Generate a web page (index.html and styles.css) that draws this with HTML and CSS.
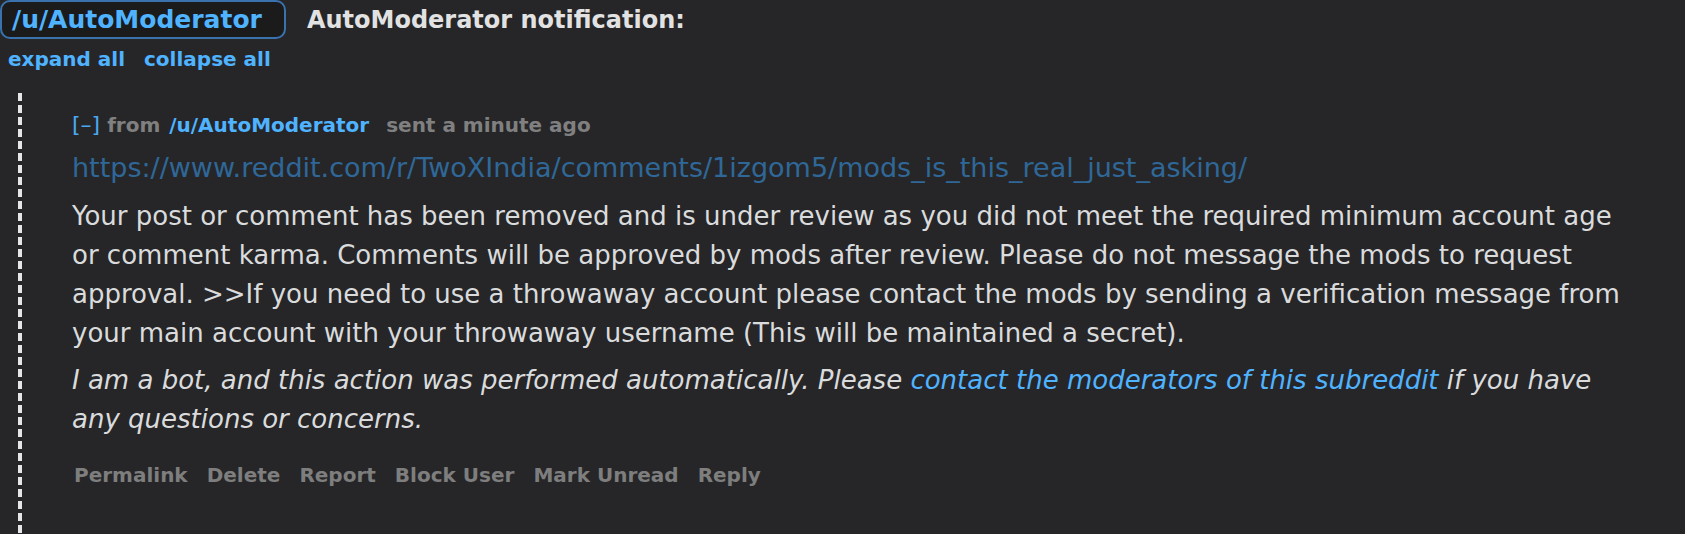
FILE: index.html
```html
<!DOCTYPE html>
<html lang="en">
<head>
    <meta charset="UTF-8">
    <title>AutoModerator notification</title>
    <link rel="stylesheet" href="styles.css">
</head>
<body>
    <div class="page">
        <div class="notice-head">
            <a class="user-pill" href="#">/u/AutoModerator</a>
            <span class="notice-title">AutoModerator notification:</span>
        </div>

        <div class="tree-tools">
            <a href="#">expand all</a>
            <a href="#">collapse all</a>
        </div>

        <div class="thread">
            <div class="message">
                <div class="tagline">
                    <a class="toggle" href="#">[–]</a>
                    <span>from</span>
                    <a class="author" href="#">/u/AutoModerator</a>
                    <span class="age">sent a minute ago</span>
                </div>

                <a class="subject-link" href="#">https://www.reddit.com/r/TwoXIndia/comments/1izgom5/mods_is_this_real_just_asking/</a>

                <div class="md">
                    <p>Your post or comment has been removed and is under review as you did not meet the required minimum account age or comment karma. Comments will be approved by mods after review. Please do not message the mods to request approval. &gt;&gt;If you need to use a throwaway account please contact the mods by sending a verification message from your main account with your throwaway username (This will be maintained a secret).</p>
                    <p class="bot-note">I am a bot, and this action was performed automatically. Please <a href="#">contact the moderators of this subreddit</a> if you have any questions or concerns.</p>
                </div>

                <ul class="buttons">
                    <li><a href="#">Permalink</a></li>
                    <li><a href="#">Delete</a></li>
                    <li><a href="#">Report</a></li>
                    <li><a href="#">Block User</a></li>
                    <li><a href="#">Mark Unread</a></li>
                    <li><a href="#">Reply</a></li>
                </ul>
            </div>
        </div>
    </div>
</body>
</html>
```

FILE: styles.css
```css
/* Page */
body {
    margin: 0;
    background: #262628;
    font-family: "DejaVu Sans", Verdana, sans-serif;
    color: #dadbdc;
    overflow: hidden;
}

a {
    text-decoration: none;
}

.page {
    height: 534px;
    display: flex;
    flex-direction: column;
}

/* Header */
.notice-head {
    display: flex;
    align-items: center;
    gap: 21px;
}

.user-pill {
    display: inline-block;
    height: 35px;
    line-height: 35px;
    padding: 0 22px 0 10px;
    background: #1b1b1c;
    border: 2px solid #3a72ad;
    border-radius: 10px;
    color: #4fb3ff;
    font-weight: bold;
    font-size: 25px;
}

.notice-title {
    font-size: 24px;
    font-weight: bold;
    color: #e2e2e2;
}

.tree-tools {
    display: flex;
    gap: 19px;
    padding: 8px 8px 0;
    font-size: 20px;
    font-weight: bold;
}

.tree-tools a {
    color: #4fb3ff;
}

/* Message thread */
.thread {
    flex: 1;
    margin: 22px 0 0 18px;
    padding: 0 0 0 54px;
    background: repeating-linear-gradient(to bottom, #e6e6e6 0 8px, transparent 8px 12px) left top / 4px 100% no-repeat;
}

.tagline {
    padding-top: 19px;
    font-size: 20px;
    font-weight: bold;
    color: #808080;
}

.tagline .toggle {
    color: #4aa8f0;
    font-weight: normal;
    font-size: 22px;
}

.tagline .author {
    color: #4fb3ff;
    margin-left: 2px;
}

.tagline .age {
    margin-left: 10px;
}

.subject-link {
    display: block;
    margin-top: 15px;
    font-size: 27px;
    color: #2f6898;
}

.md {
    margin-top: 14px;
    font-size: 26px;
    line-height: 39px;
    padding-right: 53px;
}

.md p {
    margin: 0 0 8px;
}

.md .bot-note {
    font-style: italic;
}

.md a {
    color: #4fb3ff;
}

.buttons {
    list-style: none;
    display: flex;
    gap: 19px;
    margin: 24px 0 0;
    padding: 0 0 0 2px;
    font-size: 20px;
    font-weight: bold;
}

.buttons a {
    color: #7e7e7e;
}
```
